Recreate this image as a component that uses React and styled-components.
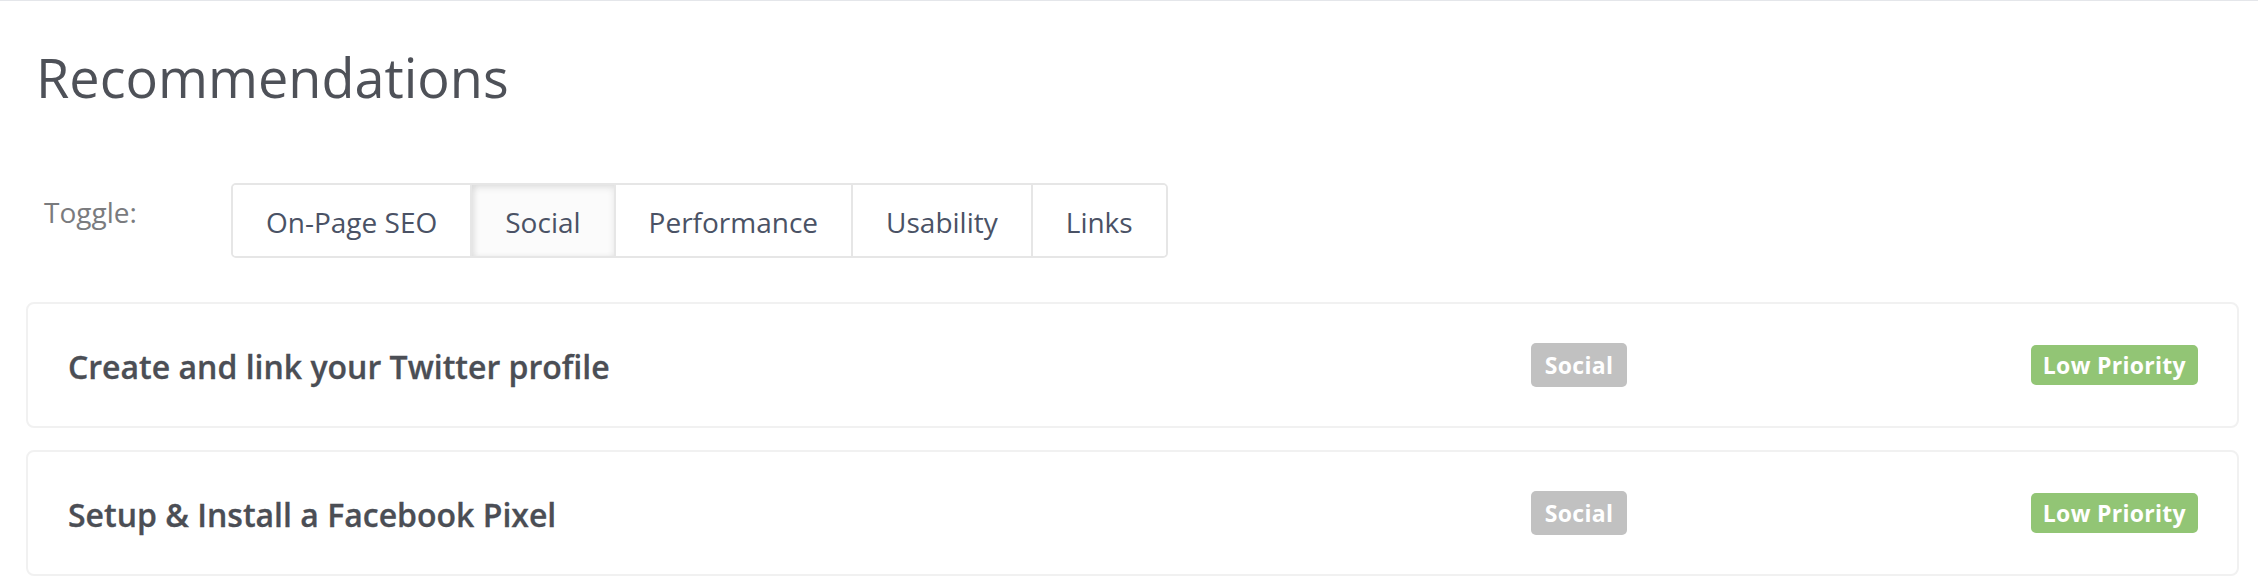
import React, { Component } from "react";
import styled, { createGlobalStyle } from "styled-components";

const
	GlobalStyle = createGlobalStyle`
		html, body {
			margin: 0;
			padding: 0;
			background: #fff;
			font-family: "Open Sans", "Noto Sans", sans-serif;
		}
	`,
	Page = styled.div`
		border-top: 1px solid #e4e6ea;
		padding: 0 19px 10px 26px;
	`,
	Heading = styled.h1`
		margin: 0;
		padding: 44px 0 0 10px;
		font-size: 54px;
		font-weight: 400;
		line-height: 64px;
		color: #4e5158;
	`,
	ToggleRow = styled.div`
		display: flex;
		align-items: flex-start;
		margin-top: 74px;
		padding-left: 18px;
	`,
	ToggleLabel = styled.span`
		width: 187px;
		padding-top: 10px;
		font-size: 28px;
		line-height: 38px;
		color: #7a7b7e;
	`,
	ButtonGroup = styled.div`
		display: flex;
		height: 71px;
		border: 2px solid #e6e6e6;
		border-radius: 5px;
		overflow: hidden;
	`,
	ToggleButton = styled.div`
		display: flex;
		align-items: center;
		padding: 2px 33px 0;
		font-size: 28px;
		color: #4a5265;
		background: ${p => p.active ? "#fbfbfb" : "#fff"};
		box-shadow: ${p => p.active ? "inset 0 3px 7px rgba(0, 0, 0, .09), inset 4px 0 5px rgba(0, 0, 0, .05)" : "none"};
		& + & {
			border-left: 2px solid #e6e6e6;
		}
	`,
	CardList = styled.div`
		display: flex;
		flex-direction: column;
		gap: 22px;
		margin-top: 44px;
	`,
	Card = styled.div`
		display: grid;
		grid-template-columns: 1fr 500px auto;
		align-items: center;
		height: 122px;
		padding: 0 39px 0 40px;
		border: 2px solid #f1f1f1;
		border-radius: 8px;
		background: #fff;
	`,
	CardTitle = styled.span`
		padding-top: 2px;
		font-size: 32px;
		font-weight: 600;
		color: #4b4e55;
		-webkit-text-stroke: .3px #4b4e55;
	`,
	Badge = styled.span`
		justify-self: start;
		display: inline-flex;
		align-items: center;
		height: ${p => p.tall ? "44px" : "40px"};
		padding: 0 ${p => p.tall ? "14px" : "12px"};
		border-radius: 5px;
		background: ${p => p.color};
		color: #fff;
		font-size: 23px;
		font-weight: 700;
		letter-spacing: .3px;
	`;

const tabs = [ "On-Page SEO", "Social", "Performance", "Usability", "Links" ];

const items = [
	{ title: "Create and link your Twitter profile", tag: "Social", priority: "Low Priority" },
	{ title: "Setup & Install a Facebook Pixel", tag: "Social", priority: "Low Priority" }
];

class App extends Component {
	constructor() {
		super();
		this.state = { active: "Social" };
	}

	render() {
		return (
			<Page>
				<GlobalStyle />
				<Heading>Recommendations</Heading>
				<ToggleRow>
					<ToggleLabel>Toggle:</ToggleLabel>
					<ButtonGroup>
						{tabs.map( tab =>
							<ToggleButton
								key={tab}
								active={tab === this.state.active}
								onClick={() => this.setState({ active: tab })}
							>
								{tab}
							</ToggleButton>
						)}
					</ButtonGroup>
				</ToggleRow>
				<CardList>
					{items.map(( item, index ) =>
						<Card key={index}>
							<CardTitle>{item.title}</CardTitle>
							<Badge tall color="#c1c1c1">{item.tag}</Badge>
							<Badge color="#92c575">{item.priority}</Badge>
						</Card>
					)}
				</CardList>
			</Page>
		);
	}
}

export default App;
